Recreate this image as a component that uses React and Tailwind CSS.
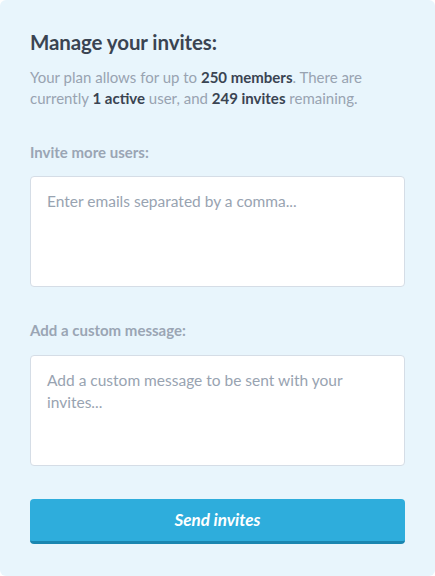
import React, { useState } from "react";

const App = () => {
  const [emails, setEmails] = useState("");
  const [message, setMessage] = useState("");

  return (
    <div className="min-h-screen bg-white font-['Lato','Noto_Sans',sans-serif]">
      <div className="w-[435px] h-[576px] bg-[#e8f5fc] rounded-[6px] px-[30px] pt-[30px]">
        <h1 className="text-[20.5px] leading-6 font-bold text-[#3a4452] tracking-[-0.1px]">
          Manage your invites:
        </h1>
        <p className="mt-[13px] text-[15px] leading-[21px] text-[#98a3b1]">
          Your plan allows for up to{" "}
          <span className="font-bold text-[#3a4452]">250 members</span>. There
          are currently <span className="font-bold text-[#3a4452]">1 active</span>{" "}
          user, and <span className="font-bold text-[#3a4452]">249 invites</span>{" "}
          remaining.
        </p>

        {/* Invite emails */}
        <label className="block mt-[33px] text-[15px] leading-5 font-bold text-[#9aa5b4]">
          Invite more users:
        </label>
        <textarea
          value={emails}
          onChange={(e) => setEmails(e.target.value)}
          placeholder="Enter emails separated by a comma..."
          className="block mt-[14px] w-full h-[111px] resize-none bg-white border border-[#d5dde6] rounded-[4px] px-4 pt-[13px] text-[15.5px] leading-[22px] text-[#3a4452] placeholder:text-[#98a3b1] outline-none"
        />

        {/* Custom message */}
        <label className="block mt-[33px] text-[15px] leading-5 font-bold text-[#9aa5b4]">
          Add a custom message:
        </label>
        <textarea
          value={message}
          onChange={(e) => setMessage(e.target.value)}
          placeholder="Add a custom message to be sent with your invites..."
          className="block mt-[15px] w-full h-[111px] resize-none bg-white border border-[#d5dde6] rounded-[4px] px-4 pt-[13px] text-[15.5px] leading-[22px] text-[#3a4452] placeholder:text-[#98a3b1] outline-none"
        />

        <button
          type="button"
          className="mt-[33px] w-full h-[45px] bg-[#2eaddc] border-b-[3px] border-[#1a86b0] rounded-[4px] text-white text-[17px] font-bold italic"
        >
          Send invites
        </button>
      </div>
    </div>
  );
};

export default App;
